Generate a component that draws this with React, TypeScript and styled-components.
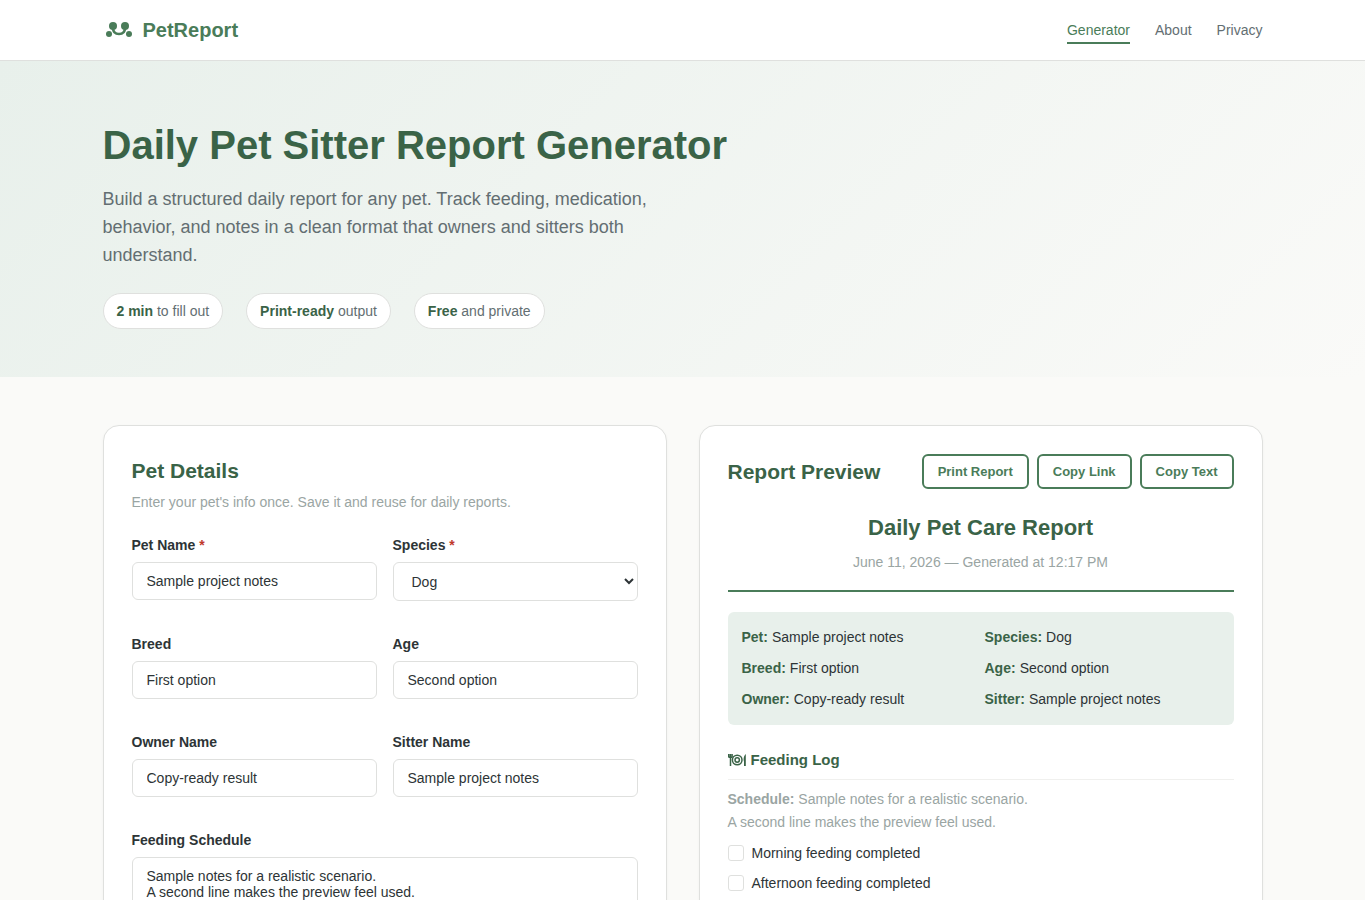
import React from "react";
import styled, { createGlobalStyle, css } from "styled-components";

const color = {
  primary: "#4a7c59",
  dark: "#3a6347",
  light: "#e8f0eb",
  page: "#fafaf8",
  text: "#2d3436",
  soft: "#636e72",
  muted: "#9aa5a3",
  border: "#dfe0de",
  danger: "#c0392b",
};

const GlobalStyle = createGlobalStyle`
  *, *::before, *::after { box-sizing: border-box; margin: 0; padding: 0; }
  body {
    font-family: "Liberation Sans", Arial, sans-serif;
    font-size: 14px;
    line-height: 24px;
    color: ${color.text};
    background: ${color.page};
  }
`;

const Container = styled.div`
  width: 100%;
  max-width: 1200px;
  margin: 0 auto;
  padding: 0 20px;
`;

const Header = styled.header`
  background: #fff;
  border-bottom: 1px solid ${color.border};
`;

const HeaderRow = styled(Container)`
  display: flex;
  align-items: center;
  justify-content: space-between;
  height: 60px;
`;

const Brand = styled.a`
  display: flex;
  align-items: center;
  gap: 8px;
  color: ${color.primary};
  font-size: 20px;
  font-weight: 700;
  text-decoration: none;
`;

const Nav = styled.nav`
  display: flex;
  gap: 25px;
`;

const NavLink = styled.a<{ $active?: boolean }>`
  padding-top: 2px;
  border-bottom: 2px solid ${(p) => (p.$active ? color.primary : "transparent")};
  color: ${(p) => (p.$active ? color.primary : color.soft)};
  text-decoration: none;
`;

const Hero = styled.section`
  padding: 60px 0 48px;
  background: linear-gradient(135deg, ${color.light} 0%, ${color.page} 100%);
`;

const HeroTitle = styled.h1`
  margin-bottom: 16px;
  color: ${color.dark};
  font-size: 40px;
  line-height: 48px;
`;

const HeroText = styled.p`
  max-width: 600px;
  margin-bottom: 24px;
  color: ${color.soft};
  font-size: 18px;
  line-height: 28px;
`;

const Chips = styled.ul`
  display: flex;
  flex-wrap: wrap;
  gap: 23px;
  list-style: none;
`;

const Chip = styled.li`
  padding: 6px 13px;
  border: 1px solid ${color.border};
  border-radius: 20px;
  background: #fff;
  color: ${color.soft};
  line-height: 22px;

  strong { color: ${color.dark}; }
`;

const Main = styled(Container).attrs({ as: "main" })`
  display: grid;
  grid-template-columns: 1fr 1fr;
  align-items: start;
  gap: 32px;
  padding-top: 48px;
  padding-bottom: 48px;

  @media (max-width: 900px) { grid-template-columns: 1fr; }
`;

const Card = styled.section`
  padding: 28px;
  border: 1px solid ${color.border};
  border-radius: 16px;
  background: #fff;
  box-shadow: 0 1px 3px rgba(0, 0, 0, 0.04);
`;

const CardTitle = styled.h2`
  color: ${color.dark};
  font-size: 21px;
  line-height: 34px;
`;

const CardHint = styled.p`
  margin: 2px 0 19px;
  color: ${color.muted};
`;

const Form = styled.form`
  display: grid;
  grid-template-columns: 1fr 1fr;
  gap: 31px 16px;
`;

const Field = styled.div<{ $wide?: boolean }>`
  grid-column: ${(p) => (p.$wide ? "1 / -1" : "auto")};
`;

const Label = styled.label`
  display: block;
  margin-bottom: 5px;
  font-weight: 700;
`;

const Required = styled.span`
  color: ${color.danger};
`;

const control = css`
  display: block;
  width: 100%;
  padding: 10px 14px;
  border: 1px solid ${color.border};
  border-radius: 6px;
  background: #fff;
  color: ${color.text};
  font-family: inherit;
  font-size: 14px;
`;

const Input = styled.input`
  ${control}
  height: 38px;
`;

const Select = styled.select`
  ${control}
  height: 39px;
`;

const TextArea = styled.textarea`
  ${control}
  min-height: 80px;
  resize: vertical;
`;

const PreviewBar = styled.div`
  display: flex;
  align-items: center;
  justify-content: space-between;
  flex-wrap: wrap;
  gap: 8px;
  margin-bottom: 20px;
`;

const Actions = styled.div`
  display: flex;
  gap: 8px;
`;

const OutlineButton = styled.button`
  padding: 8px 14px;
  border: 2px solid ${color.primary};
  border-radius: 6px;
  background: transparent;
  color: ${color.primary};
  font-family: inherit;
  font-size: 13px;
  font-weight: 700;
  line-height: 15px;
  cursor: pointer;
`;

const ReportHead = styled.header`
  margin-bottom: 20px;
  padding-bottom: 16px;
  border-bottom: 2px solid ${color.primary};
  text-align: center;
`;

const ReportTitle = styled.h3`
  margin-bottom: 4px;
  color: ${color.dark};
  font-size: 22px;
  line-height: 38px;
`;

const ReportDate = styled.p`
  color: ${color.muted};
  line-height: 23px;
`;

const Facts = styled.dl`
  display: grid;
  grid-template-columns: 1fr 1fr;
  gap: 8px;
  margin-bottom: 22px;
  padding: 14px;
  border-radius: 6px;
  background: ${color.light};
  line-height: 23px;
`;

const Fact = styled.div`
  display: flex;
  gap: 4px;

  dt { color: ${color.dark}; font-weight: 700; }
`;

const SectionTitle = styled.h4`
  display: flex;
  align-items: center;
  gap: 4px;
  margin-bottom: 8px;
  padding-bottom: 6px;
  border-bottom: 1px solid #f0f0ee;
  color: ${color.dark};
  font-size: 15px;
  line-height: 26px;
`;

const Note = styled.p`
  margin-bottom: 4px;
  color: ${color.muted};
  line-height: 23px;
`;

const CheckRow = styled.label`
  display: flex;
  align-items: center;
  gap: 8px;
  padding: 3px 0;
`;

const CheckBox = styled.input`
  width: 16px;
  height: 16px;
  border: 1px solid ${color.border};
  border-radius: 3px;
  background: #fff;
  appearance: none;

  &:checked { background: ${color.primary}; }
`;

const Logo = () => (
  <svg width="32" height="32" viewBox="0 0 32 32" fill="currentColor" aria-hidden="true">
    <circle cx="10" cy="12" r="4" />
    <circle cx="22" cy="12" r="4" />
    <circle cx="6" cy="20" r="3" />
    <circle cx="26" cy="20" r="3" />
    <path d="M10 14c0 4 2.500 6 6 6s6-2 6-6" fill="none" stroke="currentColor" strokeWidth="2.500" />
  </svg>
);

const PlateIcon = () => (
  <svg width="19" height="14" viewBox="0 0 19 14" fill="none" stroke="currentColor" aria-hidden="true">
    <path d="M0.700 1v3.200M2.400 1v3.200M4.100 1v3.200M0.500 4.300h3.800M2.500 4.500v8.500" strokeWidth="1.500" />
    <circle cx="9.200" cy="7" r="4.800" strokeWidth="1.500" />
    <circle cx="9.200" cy="7" r="2.200" strokeWidth="1.500" />
    <path d="M17.800 1v12h-1.800v-4.500c-1-2.500 0-6 1.800-7.500z" fill="currentColor" stroke="none" />
  </svg>
);

const textFields = [
  { id: "breed", label: "Breed", value: "First option" },
  { id: "age", label: "Age", value: "Second option" },
  { id: "owner", label: "Owner Name", value: "Copy-ready result" },
  { id: "sitter", label: "Sitter Name", value: "Sample project notes" },
];

const facts = [
  ["Pet:", "Sample project notes"],
  ["Species:", "Dog"],
  ["Breed:", "First option"],
  ["Age:", "Second option"],
  ["Owner:", "Copy-ready result"],
  ["Sitter:", "Sample project notes"],
];

export default function App() {
  return (
    <>
      <GlobalStyle />
      <Header>
        <HeaderRow>
          <Brand href="#">
            <Logo />
            PetReport
          </Brand>
          <Nav>
            <NavLink href="#generator" $active>Generator</NavLink>
            <NavLink href="#about">About</NavLink>
            <NavLink href="#privacy">Privacy</NavLink>
          </Nav>
        </HeaderRow>
      </Header>

      <Hero>
        <Container>
          <HeroTitle>Daily Pet Sitter Report Generator</HeroTitle>
          <HeroText>
            Build a structured daily report for any pet. Track feeding, medication, behavior, and
            notes in a clean format that owners and sitters both understand.
          </HeroText>
          <Chips>
            <Chip><strong>2 min</strong> to fill out</Chip>
            <Chip><strong>Print-ready</strong> output</Chip>
            <Chip><strong>Free</strong> and private</Chip>
          </Chips>
        </Container>
      </Hero>

      <Main>
        <Card>
          <CardTitle>Pet Details</CardTitle>
          <CardHint>Enter your pet's info once. Save it and reuse for daily reports.</CardHint>
          <Form>
            <Field>
              <Label htmlFor="name">Pet Name <Required>*</Required></Label>
              <Input id="name" defaultValue="Sample project notes" />
            </Field>
            <Field>
              <Label htmlFor="species">Species <Required>*</Required></Label>
              <Select id="species" defaultValue="Dog">
                <option>Dog</option>
              </Select>
            </Field>
            {textFields.map((f) => (
              <Field key={f.id}>
                <Label htmlFor={f.id}>{f.label}</Label>
                <Input id={f.id} defaultValue={f.value} />
              </Field>
            ))}
            <Field $wide>
              <Label htmlFor="feeding">Feeding Schedule</Label>
              <TextArea
                id="feeding"
                defaultValue={"Sample notes for a realistic scenario.\nA second line makes the preview feel used."}
              />
            </Field>
          </Form>
        </Card>

        <Card>
          <PreviewBar>
            <CardTitle>Report Preview</CardTitle>
            <Actions>
              <OutlineButton type="button">Print Report</OutlineButton>
              <OutlineButton type="button">Copy Link</OutlineButton>
              <OutlineButton type="button">Copy Text</OutlineButton>
            </Actions>
          </PreviewBar>
          <ReportHead>
            <ReportTitle>Daily Pet Care Report</ReportTitle>
            <ReportDate>June 11, 2026 — Generated at 12:17 PM</ReportDate>
          </ReportHead>
          <Facts>
            {facts.map(([name, value]) => (
              <Fact key={name}>
                <dt>{name}</dt>
                <dd>{value}</dd>
              </Fact>
            ))}
          </Facts>
          <SectionTitle><PlateIcon />Feeding Log</SectionTitle>
          <Note>
            <strong>Schedule:</strong> Sample notes for a realistic scenario.
            <br />
            A second line makes the preview feel used.
          </Note>
          <CheckRow><CheckBox type="checkbox" />Morning feeding completed</CheckRow>
          <CheckRow><CheckBox type="checkbox" />Afternoon feeding completed</CheckRow>
        </Card>
      </Main>
    </>
  );
}
